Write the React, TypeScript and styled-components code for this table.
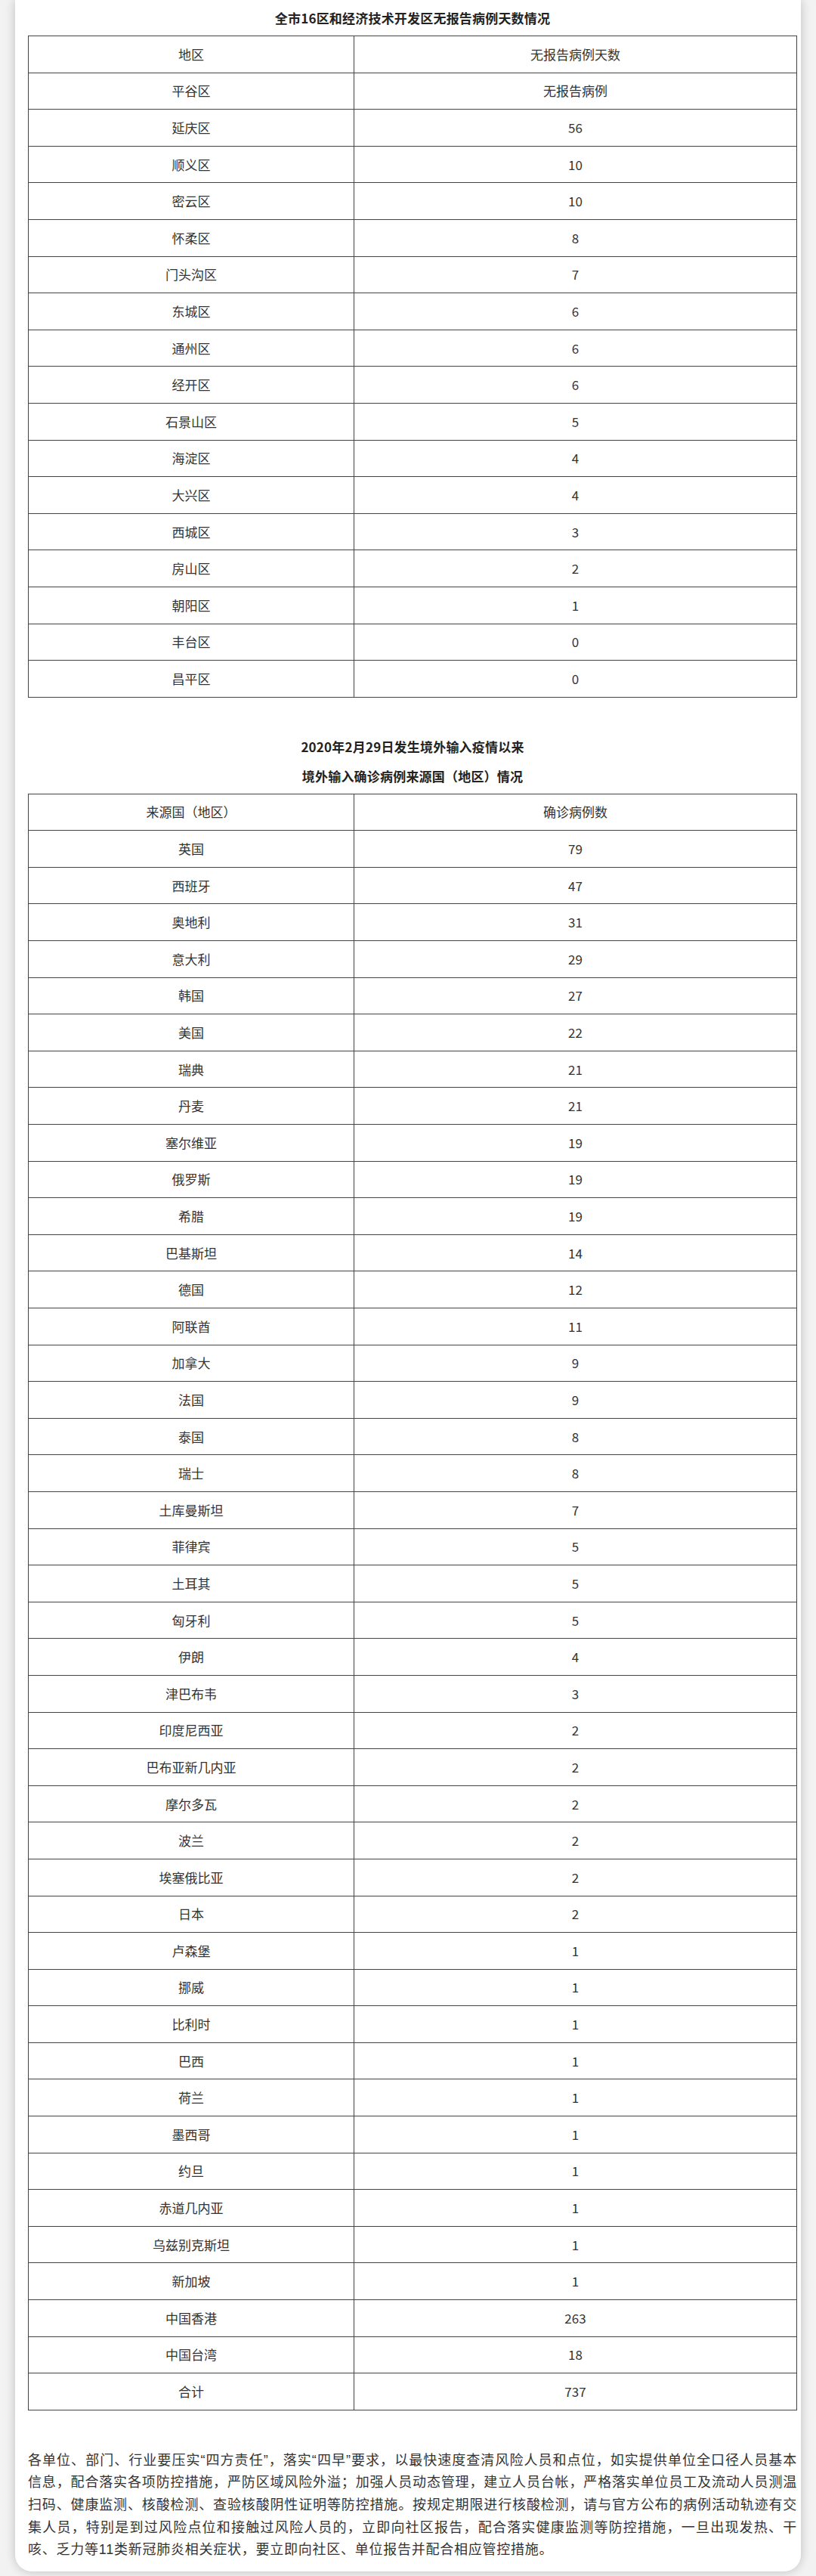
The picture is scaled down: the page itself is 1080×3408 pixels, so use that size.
import React from "react";
import styled, { createGlobalStyle } from "styled-components";

const GlobalStyle = createGlobalStyle`
  html, body {
    margin: 0;
    padding: 0;
    background: #f2f2f2;
  }
  body {
    font-family: "Noto Sans CJK SC", "Noto Sans", sans-serif;
    color: #333;
  }
`;

const Page = styled.div`
  width: 1080px;
  height: 3408px;
  padding: 0 20px;
  box-sizing: border-box;
  overflow: hidden;
`;

const Card = styled.div`
  background: #fff;
  border-radius: 0 0 22px 22px;
  box-shadow: 0 0 14px rgba(0, 0, 0, 0.22);
  padding: 4px 5px 12px 17px;
  height: 3402px;
  box-sizing: border-box;
`;

const Title = styled.div<{ $gapTop?: number }>`
  margin-top: ${(p) => p.$gapTop ?? 0}px;
  font-size: 17px;
  font-weight: 700;
  line-height: 39px;
  text-align: center;
  color: #222;
  letter-spacing: 0.2px;
`;

const Table = styled.table`
  width: 100%;
  border-collapse: collapse;
  margin-top: 4px;
  table-layout: fixed;
`;

const Cell = styled.td`
  border: 1px solid #444;
  height: 47.6px;
  padding: 0;
  text-align: center;
  vertical-align: middle;
  font-size: 17px;
  color: #333;
  line-height: 20px;
`;

const NarrowCol = styled.col`
  width: 431px;
`;

const Paragraph = styled.p`
  margin: 52px 0 0;
  font-family: "Liberation Sans", "Noto Sans CJK SC", sans-serif;
  font-size: 18px;
  line-height: 29.6px;
  letter-spacing: 0.75px;
  text-align: justify;
  color: #333;
`;

const districts: [string, string][] = [
  ["地区", "无报告病例天数"],
  ["平谷区", "无报告病例"],
  ["延庆区", "56"],
  ["顺义区", "10"],
  ["密云区", "10"],
  ["怀柔区", "8"],
  ["门头沟区", "7"],
  ["东城区", "6"],
  ["通州区", "6"],
  ["经开区", "6"],
  ["石景山区", "5"],
  ["海淀区", "4"],
  ["大兴区", "4"],
  ["西城区", "3"],
  ["房山区", "2"],
  ["朝阳区", "1"],
  ["丰台区", "0"],
  ["昌平区", "0"],
];

const countries: [string, string][] = [
  ["来源国（地区）", "确诊病例数"],
  ["英国", "79"],
  ["西班牙", "47"],
  ["奥地利", "31"],
  ["意大利", "29"],
  ["韩国", "27"],
  ["美国", "22"],
  ["瑞典", "21"],
  ["丹麦", "21"],
  ["塞尔维亚", "19"],
  ["俄罗斯", "19"],
  ["希腊", "19"],
  ["巴基斯坦", "14"],
  ["德国", "12"],
  ["阿联酋", "11"],
  ["加拿大", "9"],
  ["法国", "9"],
  ["泰国", "8"],
  ["瑞士", "8"],
  ["土库曼斯坦", "7"],
  ["菲律宾", "5"],
  ["土耳其", "5"],
  ["匈牙利", "5"],
  ["伊朗", "4"],
  ["津巴布韦", "3"],
  ["印度尼西亚", "2"],
  ["巴布亚新几内亚", "2"],
  ["摩尔多瓦", "2"],
  ["波兰", "2"],
  ["埃塞俄比亚", "2"],
  ["日本", "2"],
  ["卢森堡", "1"],
  ["挪威", "1"],
  ["比利时", "1"],
  ["巴西", "1"],
  ["荷兰", "1"],
  ["墨西哥", "1"],
  ["约旦", "1"],
  ["赤道几内亚", "1"],
  ["乌兹别克斯坦", "1"],
  ["新加坡", "1"],
  ["中国香港", "263"],
  ["中国台湾", "18"],
  ["合计", "737"],
];

const DataTable: React.FC<{ rows: [string, string][] }> = ({ rows }) => (
  <Table>
    <colgroup>
      <NarrowCol />
      <col />
    </colgroup>
    <tbody>
      {rows.map(([a, b], i) => (
        <tr key={i}>
          <Cell>{a}</Cell>
          <Cell>{b}</Cell>
        </tr>
      ))}
    </tbody>
  </Table>
);

export default function App() {
  return (
    <>
      <GlobalStyle />
      <Page>
        <Card>
          <Title>全市16区和经济技术开发区无报告病例天数情况</Title>
          <DataTable rows={districts} />
          <Title $gapTop={45}>2020年2月29日发生境外输入疫情以来</Title>
          <Title>境外输入确诊病例来源国（地区）情况</Title>
          <DataTable rows={countries} />
          <Paragraph>
            各单位、部门、行业要压实“四方责任”，落实“四早”要求，以最快速度查清风险人员和点位，如实提供单位全口径人员基本信息，配合落实各项防控措施，严防区域风险外溢；加强人员动态管理，建立人员台帐，严格落实单位员工及流动人员测温扫码、健康监测、核酸检测、查验核酸阴性证明等防控措施。按规定期限进行核酸检测，请与官方公布的病例活动轨迹有交集人员，特别是到过风险点位和接触过风险人员的，立即向社区报告，配合落实健康监测等防控措施，一旦出现发热、干咳、乏力等11类新冠肺炎相关症状，要立即向社区、单位报告并配合相应管控措施。
          </Paragraph>
        </Card>
      </Page>
    </>
  );
}
